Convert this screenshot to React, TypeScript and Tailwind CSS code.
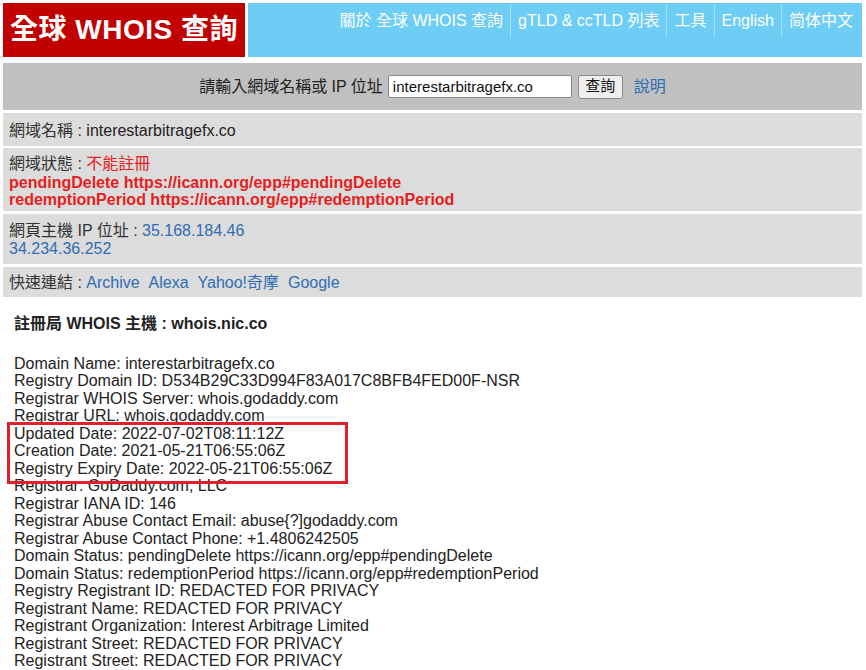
import React from "react";

const navItems = ["關於 全球 WHOIS 查詢", "gTLD & ccTLD 列表", "工具", "English", "简体中文"];

const whoisLines = [
  "Domain Name: interestarbitragefx.co",
  "Registry Domain ID: D534B29C33D994F83A017C8BFB4FED00F-NSR",
  "Registrar WHOIS Server: whois.godaddy.com",
  "Registrar URL: whois.godaddy.com",
];

const dateLines = [
  "Updated Date: 2022-07-02T08:11:12Z",
  "Creation Date: 2021-05-21T06:55:06Z",
  "Registry Expiry Date: 2022-05-21T06:55:06Z",
];

const restLines = [
  "Registrar: GoDaddy.com, LLC",
  "Registrar IANA ID: 146",
  "Registrar Abuse Contact Email: abuse{?]godaddy.com",
  "Registrar Abuse Contact Phone: +1.4806242505",
  "Domain Status: pendingDelete https://icann.org/epp#pendingDelete",
  "Domain Status: redemptionPeriod https://icann.org/epp#redemptionPeriod",
  "Registry Registrant ID: REDACTED FOR PRIVACY",
  "Registrant Name: REDACTED FOR PRIVACY",
  "Registrant Organization: Interest Arbitrage Limited",
  "Registrant Street: REDACTED FOR PRIVACY",
  "Registrant Street: REDACTED FOR PRIVACY",
];

const App = () => {
  return (
    <div
      className="w-[866px] h-[670px] overflow-hidden bg-white text-[16px] text-[#222]"
      style={{ fontFamily: '"Liberation Sans", Arial, "Noto Sans CJK TC", sans-serif' }}
    >
      <div className="pl-[3px] pt-[3px] w-[862px]">
        {/* header */}
        <div className="flex gap-[3px] h-[54px]">
          <div className="w-[242px] bg-[#c10000] flex items-center justify-center text-white font-bold text-[28px] tracking-[0.5px]">
            全球 WHOIS 查詢
          </div>
          <div className="flex-1 bg-[#6dcdf5] flex justify-end items-start pt-[3px] pr-[2px]">
            {navItems.map((item, i) => (
              <div
                key={item}
                className={
                  "px-[7px] h-[32px] leading-[32px] text-white text-[16px] whitespace-nowrap -translate-y-[1px]" +
                  (i > 0 ? " border-l border-[#a9e1f8]" : "")
                }
              >
                {item}
              </div>
            ))}
          </div>
        </div>

        {/* search */}
        <div className="mt-[6px] h-[47px] bg-[#c0c0c0] flex items-center justify-center">
          <span className="text-[16px] text-[#222]">請輸入網域名稱或 IP 位址</span>
          <div className="ml-[5px] w-[184px] h-[23px] bg-white border border-[#8a8a8a] rounded-[2px] px-[4px] leading-[21px] text-[15px] text-[#111]">
            interestarbitragefx.co
          </div>
          <div className="ml-[6px] w-[45px] h-[24px] bg-[#efefef] border border-[#8a8a8a] rounded-[3px] flex items-center justify-center text-[15px] text-[#111]">
            查詢
          </div>
          <span className="ml-[11px] text-[#2f6db5] text-[16px]">說明</span>
        </div>

        {/* info rows */}
        <div className="mt-[3px] bg-[#dcdcdc] px-[6px] pt-[8px] pb-[6px] leading-[19px] text-[#333]">
          網域名稱 : <span className="text-[#222]">interestarbitragefx.co</span>
        </div>
        <div className="mt-[2px] bg-[#dcdcdc] px-[6px] pt-[6px] pb-[3px] text-[#333]">
          <div className="leading-[20px]">
            網域狀態 : <span className="text-[#e62020]">不能註冊</span>
          </div>
          <div className="leading-[17px] font-bold text-[#e62020]">pendingDelete https://icann.org/epp#pendingDelete</div>
          <div className="leading-[17px] font-bold text-[#e62020]">redemptionPeriod https://icann.org/epp#redemptionPeriod</div>
        </div>
        <div className="mt-[3px] bg-[#dcdcdc] px-[6px] pt-[8px] pb-[6px] leading-[18px] text-[#333]">
          <div>
            網頁主機 IP 位址 : <span className="text-[#2f6db5]">35.168.184.46</span>
          </div>
          <div className="text-[#2f6db5]">34.234.36.252</div>
        </div>
        <div className="mt-[3px] bg-[#dcdcdc] px-[6px] pt-[6px] pb-[5px] leading-[19px] text-[#333]">
          快速連結 :{" "}
          <span className="text-[#2f6db5]">
            Archive&nbsp;&nbsp;Alexa&nbsp;&nbsp;Yahoo!奇摩&nbsp;&nbsp;Google
          </span>
        </div>

        {/* whois raw */}
        <div className="px-[11px] pt-[18px] leading-[17.5px] text-[#222]">
          <div className="font-bold text-[16px]">註冊局 WHOIS 主機 : whois.nic.co</div>
          <div className="h-[22px]" />
          {whoisLines.map((l) => (
            <div key={l}>{l}</div>
          ))}
          <div className="relative">
            {dateLines.map((l) => (
              <div key={l}>{l}</div>
            ))}
            <div className="absolute -left-[7px] -top-[3px] w-[341px] h-[62px] border-[3px] border-[#e3202a]" />
          </div>
          {restLines.map((l, i) => (
            <div key={l + i}>{l}</div>
          ))}
        </div>
      </div>
    </div>
  );
};

export default App;
